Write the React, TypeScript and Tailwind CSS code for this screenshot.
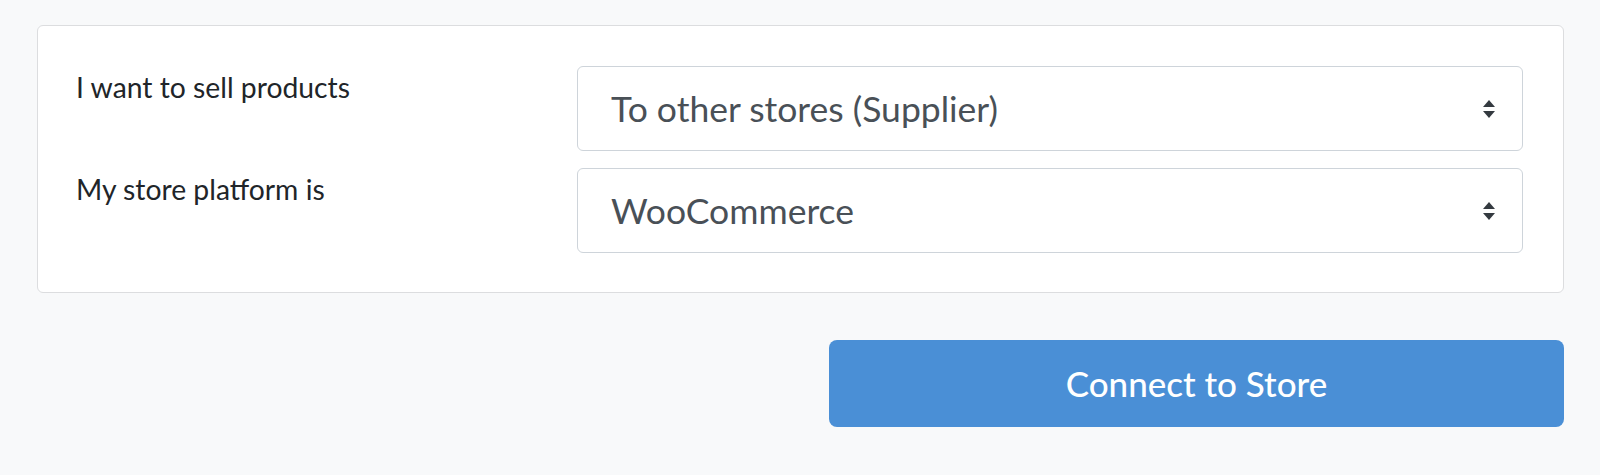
import React from "react";

function Arrows() {
  return (
    <svg width="12" height="18" viewBox="0 0 12 18" className="shrink-0">
      <path d="M6 0 L12 7 L0 7 Z" fill="#343a40" />
      <path d="M0 11 L12 11 L6 18 Z" fill="#343a40" />
    </svg>
  );
}

function Select({ value }: { value: string }) {
  return (
    <div className="flex h-[85px] flex-1 items-center justify-between rounded-[6px] border border-[#ced4da] bg-white pl-[33px] pr-[27px]">
      <span className="text-[35.5px] leading-none text-[#495057]">{value}</span>
      <Arrows />
    </div>
  );
}

function Row({ label, value }: { label: string; value: string }) {
  return (
    <div className="flex items-start">
      <div className="w-[501px] shrink-0 pt-[3px] text-[28.3px] leading-[36px] text-[#212529]">
        {label}
      </div>
      <Select value={value} />
    </div>
  );
}

export default function App() {
  return (
    <div className="min-h-[475px] w-full bg-[#f8f9fa] pb-[48px] pl-[37px] pr-[36px] pt-[25px] font-['Lato',sans-serif]">
      <div className="flex flex-col gap-[17px] rounded-[6px] border border-[#dcdddf] bg-white pb-[39px] pl-[38px] pr-[40px] pt-[40px]">
        <Row label="I want to sell products" value="To other stores (Supplier)" />
        <Row label="My store platform is" value="WooCommerce" />
      </div>
      <div className="mt-[47px] flex justify-end">
        <button className="flex h-[87px] w-[735px] items-center justify-center rounded-[8px] bg-[#4a8fd6] text-[35px] font-medium text-white">
          Connect to Store
        </button>
      </div>
    </div>
  );
}
